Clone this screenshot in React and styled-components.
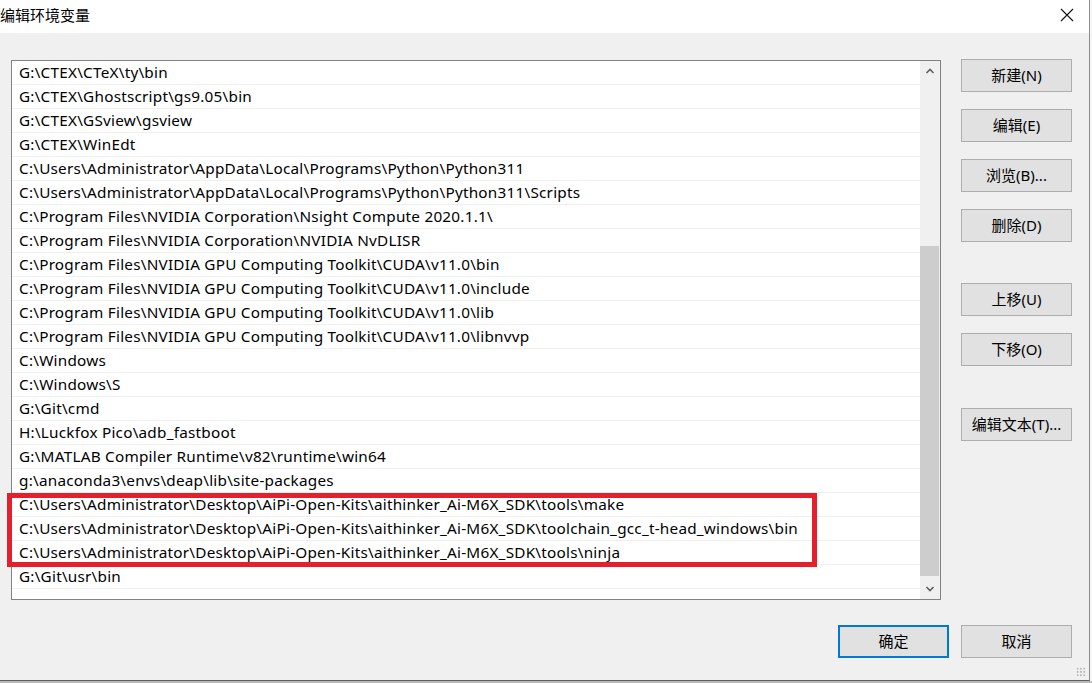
import React from "react";
import styled, { createGlobalStyle } from "styled-components";

const GlobalStyle = createGlobalStyle`
  html, body { margin: 0; padding: 0; background: #f4f4f4; }
  body { font-family: "Noto Sans", "Noto Sans CJK SC", sans-serif; }
`;

const paths = [
  "G:\\CTEX\\CTeX\\ty\\bin",
  "G:\\CTEX\\Ghostscript\\gs9.05\\bin",
  "G:\\CTEX\\GSview\\gsview",
  "G:\\CTEX\\WinEdt",
  "C:\\Users\\Administrator\\AppData\\Local\\Programs\\Python\\Python311",
  "C:\\Users\\Administrator\\AppData\\Local\\Programs\\Python\\Python311\\Scripts",
  "C:\\Program Files\\NVIDIA Corporation\\Nsight Compute 2020.1.1\\",
  "C:\\Program Files\\NVIDIA Corporation\\NVIDIA NvDLISR",
  "C:\\Program Files\\NVIDIA GPU Computing Toolkit\\CUDA\\v11.0\\bin",
  "C:\\Program Files\\NVIDIA GPU Computing Toolkit\\CUDA\\v11.0\\include",
  "C:\\Program Files\\NVIDIA GPU Computing Toolkit\\CUDA\\v11.0\\lib",
  "C:\\Program Files\\NVIDIA GPU Computing Toolkit\\CUDA\\v11.0\\libnvvp",
  "C:\\Windows",
  "C:\\Windows\\S",
  "G:\\Git\\cmd",
  "H:\\Luckfox Pico\\adb_fastboot",
  "G:\\MATLAB Compiler Runtime\\v82\\runtime\\win64",
  "g:\\anaconda3\\envs\\deap\\lib\\site-packages",
  "C:\\Users\\Administrator\\Desktop\\AiPi-Open-Kits\\aithinker_Ai-M6X_SDK\\tools\\make",
  "C:\\Users\\Administrator\\Desktop\\AiPi-Open-Kits\\aithinker_Ai-M6X_SDK\\toolchain_gcc_t-head_windows\\bin",
  "C:\\Users\\Administrator\\Desktop\\AiPi-Open-Kits\\aithinker_Ai-M6X_SDK\\tools\\ninja",
  "G:\\Git\\usr\\bin",
];

const Screen = styled.div`
  width: 1092px;
  height: 683px;
  overflow: hidden;
  background: #f7f7f7;
`;

const Dialog = styled.div`
  width: 1089px;
  height: 680px;
  border-right: 1px solid #8c8c8c;
  border-bottom: 1px solid #5e5e5e;
  background: #f0f0f0;
  display: flex;
  flex-direction: column;
  position: relative;
`;

const TitleBar = styled.div`
  height: 33px;
  background: #ffffff;
  display: flex;
  align-items: center;
  justify-content: space-between;
  flex-shrink: 0;
`;

const Title = styled.span`
  margin: -4px 0 0 0;
  font-family: "Noto Sans CJK SC", sans-serif;
  font-size: 15px;
  color: #000;
`;

const Close = styled.div`
  width: 46px;
  height: 33px;
  display: flex;
  align-items: center;
  justify-content: center;
  margin-right: -1px;
  margin-top: -4px;
`;

const Body = styled.div`
  flex: 1;
  padding: 26px 0 0 11px;
  display: flex;
  flex-direction: column;
`;

const Main = styled.div`
  display: flex;
  gap: 20px;
  position: relative;
`;

const ListBox = styled.div`
  width: 928px;
  height: 538px;
  margin-top: 1px;
  border: 1px solid #828282;
  background: #fff;
  display: flex;
`;

const Rows = styled.div`
  flex: 1;
  display: flex;
  flex-direction: column;
`;

const Row = styled.div`
  height: 21px;
  padding: 0 0 2px 7px;
  border-bottom: 1px solid #efefef;
  display: flex;
  align-items: center;
  font-size: 15.3px;
  letter-spacing: 0.23px;
  color: #000;
  white-space: nowrap;
`;

const ScrollBar = styled.div`
  width: 20px;
  background: #f0f0f0;
  display: flex;
  flex-direction: column;
`;

const Arrow = styled.div`
  height: 20px;
  display: flex;
  align-items: center;
  justify-content: center;
`;

const Track = styled.div`
  flex: 1;
  display: flex;
  flex-direction: column;
`;

const Thumb = styled.div`
  margin-top: ${(p) => p.$offset}px;
  height: ${(p) => p.$size}px;
  width: 19px;
  background: #cdcdcd;
`;

const Highlight = styled.div`
  position: absolute;
  left: -4px;
  top: 434px;
  width: 800px;
  height: 64px;
  border: 5px solid #e3202b;
  pointer-events: none;
`;

const Side = styled.div`
  display: flex;
  flex-direction: column;
`;

const Button = styled.div`
  box-sizing: border-box;
  width: 111px;
  height: 33px;
  padding-bottom: 2px;
  margin-top: ${(p) => p.$gap || 0}px;
  background: #e1e1e1;
  border: ${(p) => (p.$primary ? "2px solid #0078d7" : "1px solid #adadad")};
  display: flex;
  align-items: center;
  justify-content: center;
  font-family: "Noto Sans", "Noto Sans CJK SC", sans-serif;
  font-size: 15px;
  color: #000;
  white-space: nowrap;
`;

const Footer = styled.div`
  display: flex;
  justify-content: flex-end;
  gap: 12px;
  margin-top: 25px;
  padding-right: 17px;
`;

const Grip = styled.div`
  position: absolute;
  right: 3px;
  bottom: 3px;
  width: 10px;
  height: 10px;
  background-image: radial-gradient(#b4b4b4 45%, transparent 50%);
  background-size: 3.3px 3.3px;
`;

const Taskbar = styled.div`
  height: 2px;
  background: #b8b8b8;
`;

const ChevronUp = () => (
  <svg width="10" height="8" viewBox="0 0 10 8">
    <path d="M1.5 6 L5 2.5 L8.5 6" fill="none" stroke="#606060" strokeWidth="1.6" />
  </svg>
);

const ChevronDown = () => (
  <svg width="10" height="8" viewBox="0 0 10 8">
    <path d="M1.5 2 L5 5.5 L8.5 2" fill="none" stroke="#606060" strokeWidth="1.6" />
  </svg>
);

export default function App() {
  return (
    <Screen>
      <GlobalStyle />
      <Dialog>
        <TitleBar>
          <Title>编辑环境变量</Title>
          <Close>
            <svg width="14" height="14" viewBox="0 0 14 14">
              <path d="M1 1 L13 13 M13 1 L1 13" stroke="#111" strokeWidth="1.1" />
            </svg>
          </Close>
        </TitleBar>
        <Body>
          <Main>
            <ListBox>
              <Rows>
                {paths.map((p) => (
                  <Row key={p}>{p}</Row>
                ))}
              </Rows>
              <ScrollBar>
                <Arrow>
                  <ChevronUp />
                </Arrow>
                <Track>
                  <Thumb $offset={165} $size={330} />
                </Track>
                <Arrow>
                  <ChevronDown />
                </Arrow>
              </ScrollBar>
            </ListBox>
            <Highlight />
            <Side>
              <Button>新建(N)</Button>
              <Button $gap={17}>编辑(E)</Button>
              <Button $gap={17}>浏览(B)...</Button>
              <Button $gap={17}>删除(D)</Button>
              <Button $gap={41}>上移(U)</Button>
              <Button $gap={17}>下移(O)</Button>
              <Button $gap={42}>编辑文本(T)...</Button>
            </Side>
          </Main>
          <Footer>
            <Button $primary>确定</Button>
            <Button>取消</Button>
          </Footer>
        </Body>
        <Grip />
      </Dialog>
      <Taskbar />
    </Screen>
  );
}
